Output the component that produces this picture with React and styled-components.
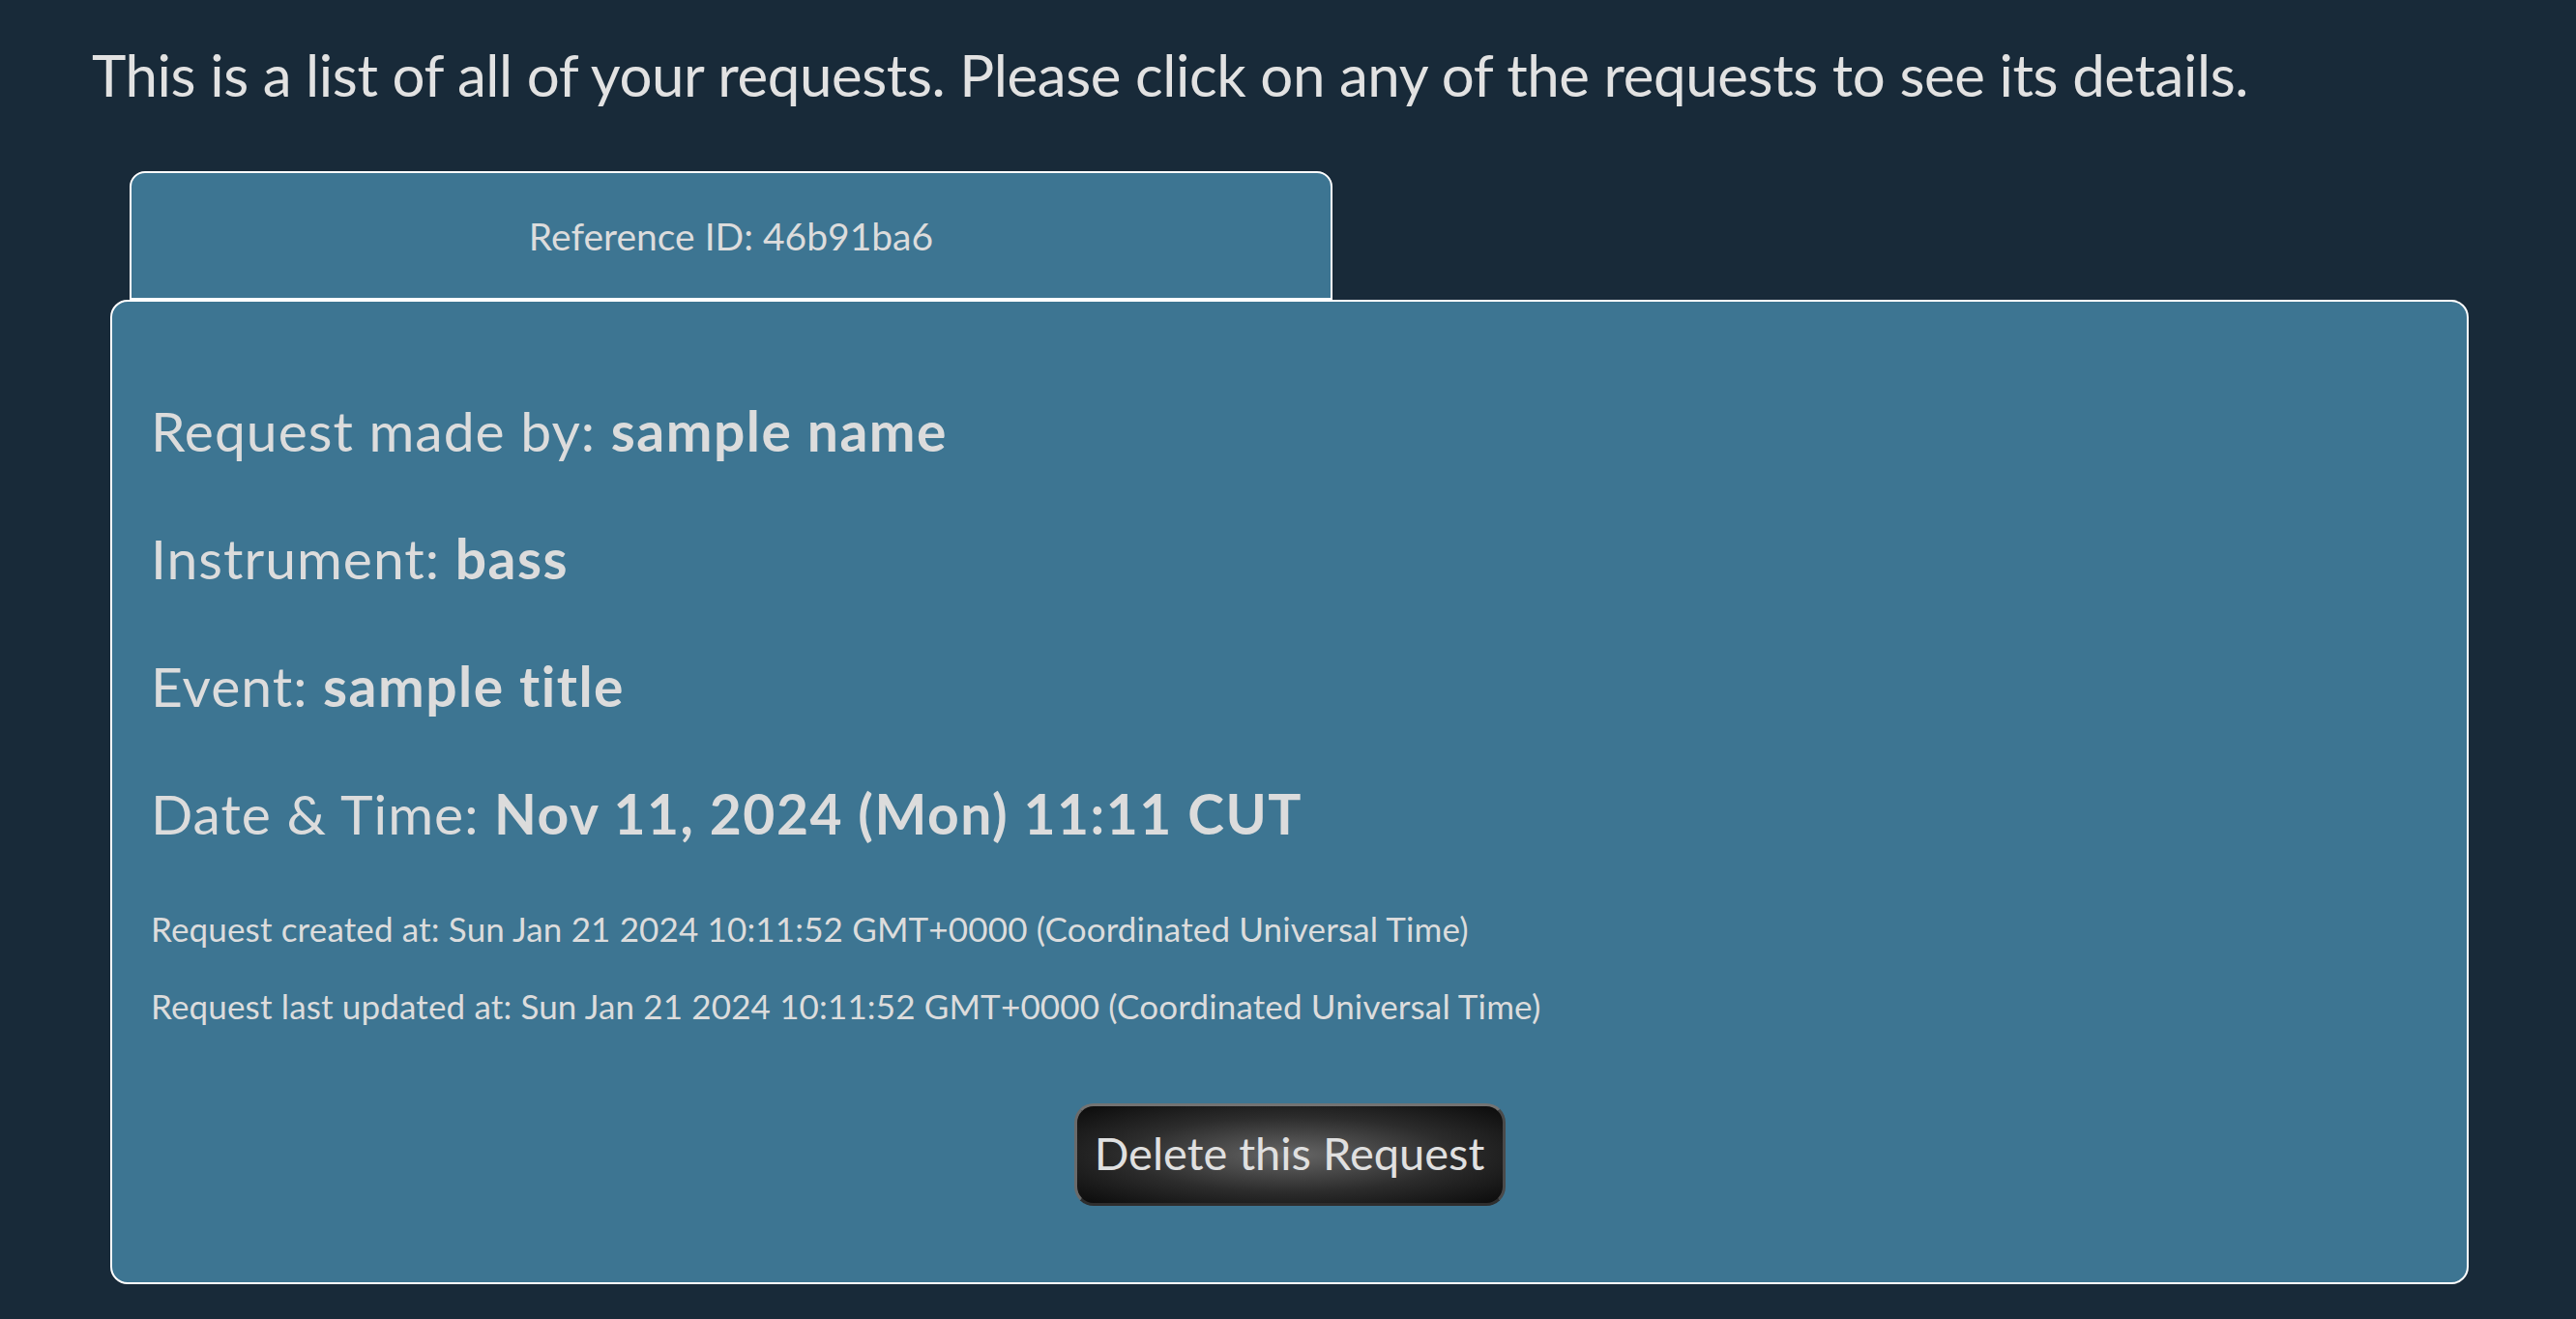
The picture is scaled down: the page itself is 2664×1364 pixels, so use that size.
import React from 'react';
import styled, { createGlobalStyle } from 'styled-components';

const GlobalStyle = createGlobalStyle`
	html, body {
		margin: 0;
		padding: 0;
		background: #182a39;
	}
	body {
		font-family: Lato, "Open Sans", sans-serif;
		color: #dedede;
	}
`;

const request = {
	id: '46b91ba6',
	name: 'sample name',
	instrument: 'bass',
	event: 'sample title',
	date: 'Nov 11, 2024 (Mon) 11:11 CUT',
	created: 'Sun Jan 21 2024 10:11:52 GMT+0000 (Coordinated Universal Time)',
	updated: 'Sun Jan 21 2024 10:11:52 GMT+0000 (Coordinated Universal Time)',
};

const App = () => (
	<>
		<GlobalStyle />
		<Page>
			<Intro>This is a list of all of your requests. Please click on any of the requests to see its details.</Intro>
			<RequestList>
				<RequestItem {...request} />
			</RequestList>
		</Page>
	</>
);

const RequestItem = ({ id, name, instrument, event, date, created, updated }) => (
	<StyledRequest>
		<Tab>Reference ID: {id}</Tab>
		<Card>
			<Fields>
				<Field>Request made by: <strong>{name}</strong></Field>
				<Field>Instrument: <strong>{instrument}</strong></Field>
				<Field>Event: <strong>{event}</strong></Field>
				<Field>Date &amp; Time: <strong>{date}</strong></Field>
			</Fields>
			<Stamps>
				<Stamp>Request created at: {created}</Stamp>
				<Stamp>Request last updated at: {updated}</Stamp>
			</Stamps>
			<Actions>
				<DeleteButton type="button">Delete this Request</DeleteButton>
			</Actions>
		</Card>
	</StyledRequest>
);

const Page = styled.main`
	padding: 37px 111px 40px 114px;
`;

const Intro = styled.p`
	margin: 0 0 60px -19px;
	font-size: 60px;
	line-height: 80px;
	letter-spacing: -0.4px;
	color: #e2e2e2;
`;

const RequestList = styled.ul`
	list-style: none;
	margin: 0;
	padding: 0;
`;

const StyledRequest = styled.li`
	display: flex;
	flex-direction: column;
`;

const Tab = styled.div`
	display: flex;
	align-items: center;
	justify-content: center;
	box-sizing: border-box;
	width: 1244px;
	height: 133px;
	margin-left: 20px;
	background: #3d7592;
	border: 2px solid #ffffff;
	border-radius: 16px 16px 0 0;
	font-size: 39px;
	color: #dcdcdc;
`;

const Card = styled.div`
	display: flex;
	flex-direction: column;
	background: #3d7592;
	border: 2px solid #ffffff;
	border-radius: 18px;
	padding: 99px 40px 79px;
	color: #dcdcdc;
`;

const Fields = styled.div`
	display: grid;
	row-gap: 64px;
`;

const Field = styled.p`
	margin: 0;
	font-size: 57px;
	line-height: 68px;
	letter-spacing: 1px;
	strong {
		font-weight: 700;
		letter-spacing: 1.5px;
	}
`;

const Stamps = styled.div`
	display: grid;
	row-gap: 38px;
	margin-top: 64px;
`;

const Stamp = styled.p`
	margin: 0;
	font-size: 35px;
	line-height: 42px;
	letter-spacing: 0.15px;
`;

const Actions = styled.div`
	display: flex;
	justify-content: center;
	margin-top: 80px;
`;

const DeleteButton = styled.button`
	box-sizing: border-box;
	width: 446px;
	height: 106px;
	padding: 0 0 5px;
	border: 3px solid;
	border-color: #737373 #4a4a4a #2e2e2e #6a6a6a;
	border-radius: 20px;
	background: radial-gradient(ellipse at center, #666666 0%, #2c2c2c 55%, #0b0b0b 100%);
	font-family: Lato, "Open Sans", sans-serif;
	font-size: 47px;
	color: #e0e0e0;
	cursor: pointer;
`;

export default App;
